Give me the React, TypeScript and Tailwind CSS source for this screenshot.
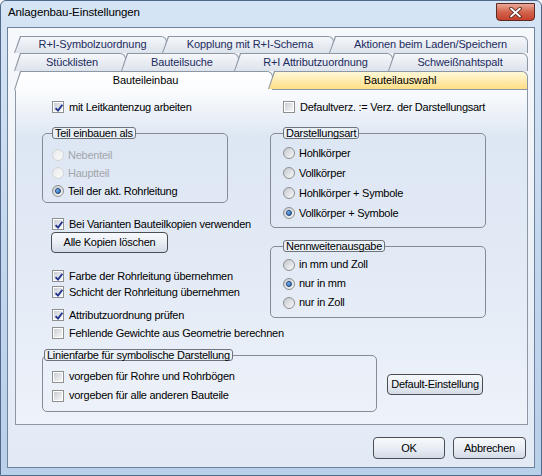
import React from "react";

const F = "font-['Liberation_Sans',Arial,sans-serif]";

const CheckMark = () => (
  <svg width="10" height="10" viewBox="0 0 10 10" className="absolute left-[0px] top-[0px]">
    <path d="M1.6 5.2 L4 7.6 L8.4 1.8" fill="none" stroke="#22358c" strokeWidth="1.9" />
  </svg>
);

const Check = ({ label, checked, className = "" }: { label: string; checked?: boolean; className?: string }) => (
  <div className={`flex h-[16px] items-center gap-[5px] whitespace-nowrap ${className}`}>
    <div className="box-border h-[12px] w-[12px] shrink-0 border border-[#8e8f8f] bg-white p-[1px]">
      <div className="relative h-full w-full bg-gradient-to-br from-[#c9ced5] to-[#f7f7f7]">
        {checked && <CheckMark />}
      </div>
    </div>
    <span>{label}</span>
  </div>
);

const Radio = ({ label, checked, disabled, className = "" }: { label: string; checked?: boolean; disabled?: boolean; className?: string }) => (
  <div className={`flex items-center gap-[4px] whitespace-nowrap ${className}`}>
    <div
      className={`box-border flex h-[12px] w-[12px] shrink-0 items-center justify-center rounded-full border ${
        disabled
          ? "border-[#d2d4d7] bg-gradient-to-br from-[#e8e9eb] to-[#fbfbfb]"
          : "border-[#8e8f8f] bg-gradient-to-br from-[#c3c8cf] to-[#fafafa]"
      }`}
    >
      {checked && (
        <div className="box-border h-[6px] w-[6px] rounded-full border border-[#1f3c73] bg-gradient-to-br from-[#8fd0ff] to-[#1860b0]" />
      )}
    </div>
    <span className={disabled ? "text-[#a3a6ab]" : ""}>{label}</span>
  </div>
);

const Group = ({ legend, className = "", children }: { legend: string; className?: string; children: React.ReactNode }) => (
  <fieldset className={`box-border rounded-[5px] border border-[#858b94] ${className}`}>
    <legend className="box-border rounded-[3px] border border-[#6f747b] bg-[#eaf0f8] px-[2px] leading-[10px]">
      {legend}
    </legend>
    {children}
  </fieldset>
);

const Button = ({ label, className = "" }: { label: string; className?: string }) => (
  <div
    className={`box-border flex shrink-0 items-center justify-center rounded-[4px] border border-[#4a4d52] bg-gradient-to-b from-[#f7f9fc] via-[#e9eef5] to-[#d3dbe6] ${className}`}
  >
    {label}
  </div>
);

// tab with slanted left edge: outer layer is the border colour, inner layer the fill
const Tab = ({ label, w, fill, className = "" }: { label: string; w: string; fill: string; className?: string }) => (
  <div
    className={`relative box-border shrink-0 rounded-tr-[6px] bg-[#8d96a3] [clip-path:polygon(6px_0,100%_0,100%_100%,0_100%)] ${w} ${className}`}
  >
    <div
      className={`absolute bottom-0 left-[1px] right-[1px] top-[1px] rounded-tr-[5px] [clip-path:polygon(6px_0,100%_0,100%_100%,0_100%)] ${fill}`}
    />
    <div className="relative flex h-full items-center justify-center pl-[4px] tracking-[-0.1px]">{label}</div>
  </div>
);

const tabFill = "bg-gradient-to-b from-[#f5f7fa] to-[#dde3ec]";

export default function App() {
  return (
    <div className={`h-[476px] w-[542px] overflow-hidden bg-white text-[11px] tracking-[-0.25px] text-black ${F}`}>
      <div className="box-border flex h-full flex-col rounded-t-[6px] border border-[#50698a] bg-gradient-to-b from-[#d6e5f5] via-[#c3d7ee] to-[#b9d0ea]">
        {/* title bar */}
        <div className="relative flex h-[26px] shrink-0 items-center pl-[7px]">
          <span className="mt-[-2px] text-[11.5px] tracking-[-0.1px]">Anlagenbau-Einstellungen</span>
          <div className="absolute right-[6px] top-[2px] box-border flex h-[18px] w-[39px] items-center justify-center rounded-b-[4px] border border-[#5b2a22] bg-gradient-to-b from-[#e9a999] via-[#d2634c] to-[#c6402a]">
            <svg width="13" height="11" viewBox="0 0 13 11">
              <path d="M2 1.5 L11 9.5 M11 1.5 L2 9.5" stroke="#4a1c14" strokeWidth="3.4" strokeLinecap="round" />
              <path d="M2 1.5 L11 9.5 M11 1.5 L2 9.5" stroke="#ffffff" strokeWidth="1.8" strokeLinecap="round" />
            </svg>
          </div>
        </div>

        {/* client */}
        <div className="mx-[6px] box-border flex h-[441px] shrink-0 flex-col border border-[#6f829c] bg-gradient-to-b from-[#f6f8fb] to-[#e2eaf5]">
          {/* tab rows */}
          <div className="ml-[6px] mt-[8px] flex w-[514px] flex-col text-[#1c2b5e]">
            <div className="flex h-[17px]">
              <Tab label="R+I-Symbolzuordnung" w="w-[153px]" fill={tabFill} />
              <Tab label="Kopplung mit R+I-Schema" w="w-[172px]" className="-ml-[5px]" fill={tabFill} />
              <Tab label="Aktionen beim Laden/Speichern" w="w-[199px]" className="-ml-[5px]" fill={tabFill} />
            </div>
            <div className="flex h-[18px]">
              <Tab label="Stücklisten" w="w-[112px]" fill={tabFill} />
              <Tab label="Bauteilsuche" w="w-[118px]" className="-ml-[5px]" fill={tabFill} />
              <Tab label="R+I Attributzuordnung" w="w-[159px]" className="-ml-[5px]" fill={tabFill} />
              <Tab label="Schweißnahtspalt" w="w-[140px]" className="-ml-[5px]" fill={tabFill} />
            </div>
            <div className="relative z-10 flex h-[18px] text-black">
              <Tab label="Bauteileinbau" w="w-[259px]" className="h-[19px]" fill="bg-gradient-to-b from-[#ffffff] to-[#fbfcfe]" />
              <Tab
                label="Bauteilauswahl"
                w="w-[260px]"
                className="-ml-[5px]"
                fill="bg-gradient-to-b from-[#fff8d8] to-[#ffdf85]"
              />
            </div>
          </div>

          {/* panel */}
          <div className="ml-[7px] box-border h-[336px] w-[513px] shrink-0 border border-[#8d96a3] bg-[linear-gradient(to_bottom,#fbfcfe_0%,#dde7f3_14%,#e1e9f5_45%,#e9eff8_80%,#eef2f9_100%)]">
            <div className="flex pl-[26px]">
              {/* left column */}
              <div className="flex w-[228px] flex-col">
                <Check checked label="mit Leitkantenzug arbeiten" className="ml-[10px] mt-[9px]" />
                <Group legend="Teil einbauen als" className="mt-[12px] w-[186px] pb-[2px] pl-[9px] pt-[7px]">
                  <Radio disabled label="Nebenteil" className="h-[18px]" />
                  <Radio disabled label="Hauptteil" className="h-[18px]" />
                  <Radio checked label="Teil der akt. Rohrleitung" className="h-[18px]" />
                </Group>
                <Check checked label="Bei Varianten Bauteilkopien verwenden" className="ml-[10px] mt-[13px]" />
                <Button label="Alle Kopien löschen" className="ml-[9px] h-[21px] w-[117px]" />
                <Check checked label="Farbe der Rohrleitung übernehmen" className="ml-[10px] mt-[15px]" />
                <Check checked label="Schicht der Rohrleitung übernehmen" className="ml-[10px]" />
                <Check checked label="Attributzuordnung prüfen" className="ml-[10px] mt-[7px]" />
                <Check label="Fehlende Gewichte aus Geometrie berechnen" className="ml-[10px] mt-[2px]" />
              </div>
              {/* right column */}
              <div className="flex flex-col">
                <Check label="Defaultverz. := Verz. der Darstellungsart" className="ml-[13px] mt-[9px]" />
                <Group legend="Darstellungsart" className="mt-[12px] w-[216px] pb-[4px] pl-[12px] pt-[4px]">
                  <Radio label="Hohlkörper" className="h-[20px]" />
                  <Radio label="Vollkörper" className="h-[20px]" />
                  <Radio label="Hohlkörper + Symbole" className="h-[20px]" />
                  <Radio checked label="Vollkörper + Symbole" className="h-[20px]" />
                </Group>
                <Group legend="Nennweitenausgabe" className="mt-[12px] w-[216px] pb-[5px] pl-[12px] pt-[3px]">
                  <Radio label="in mm und Zoll" className="h-[19px]" />
                  <Radio checked label="nur in mm" className="h-[19px]" />
                  <Radio label="nur in Zoll" className="h-[19px]" />
                </Group>
              </div>
            </div>
            {/* bottom row */}
            <div className="mt-[8px] flex items-start pl-[26px]">
              <Group legend="Linienfarbe für symbolische Darstellung" className="w-[335px] pb-[6px] pl-[1px] pt-[6px]">
                <Check label="vorgeben für Rohre und Rohrbögen" className="ml-[8px] h-[19px]" />
                <Check label="vorgeben für alle anderen Bauteile" className="ml-[8px] h-[19px]" />
              </Group>
              <Button label="Default-Einstellung" className="ml-[10px] mt-[25px] h-[21px] w-[96px]" />
            </div>
          </div>

          {/* dialog buttons */}
          <div className="mt-[12px] flex justify-end gap-[8px] pr-[8px]">
            <Button label="OK" className="h-[22px] w-[72px]" />
            <Button label="Abbrechen" className="h-[22px] w-[73px]" />
          </div>
        </div>
      </div>
    </div>
  );
}
